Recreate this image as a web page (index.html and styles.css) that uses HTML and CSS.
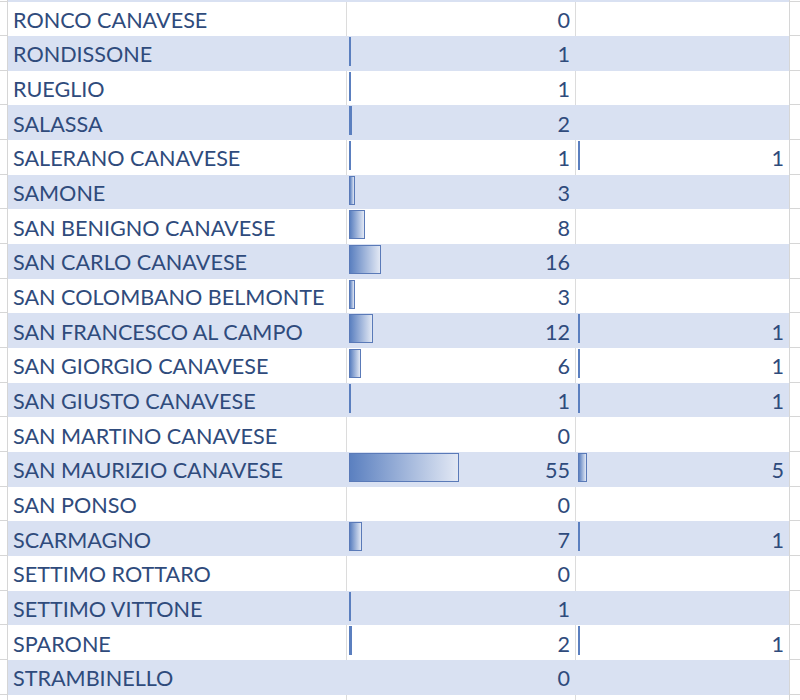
FILE: index.html
```html
<!DOCTYPE html>
<html>
<head>
<meta charset="utf-8">
<link rel="stylesheet" href="styles.css">
</head>
<body>
<div class="sheet">
  <div class="row top band"><div class="edge"></div><div class="cell name"></div><div class="cell num"></div><div class="cell num2"></div><div class="edge-r"></div></div>

  <div class="row"><div class="edge"></div><div class="cell name">RONCO CANAVESE</div><div class="cell num"><span class="v">0</span></div><div class="cell num2"></div><div class="edge-r"></div></div>
  <div class="row band"><div class="edge"></div><div class="cell name">RONDISSONE</div><div class="cell num"><span class="bar thin" style="width:2px"></span><span class="v">1</span></div><div class="cell num2"></div><div class="edge-r"></div></div>
  <div class="row"><div class="edge"></div><div class="cell name">RUEGLIO</div><div class="cell num"><span class="bar thin" style="width:2px"></span><span class="v">1</span></div><div class="cell num2"></div><div class="edge-r"></div></div>
  <div class="row band"><div class="edge"></div><div class="cell name">SALASSA</div><div class="cell num"><span class="bar thin" style="width:3px"></span><span class="v">2</span></div><div class="cell num2"></div><div class="edge-r"></div></div>
  <div class="row"><div class="edge"></div><div class="cell name">SALERANO CANAVESE</div><div class="cell num"><span class="bar thin" style="width:2px"></span><span class="v">1</span></div><div class="cell num2"><span class="bar thin" style="width:2px"></span><span class="v">1</span></div><div class="edge-r"></div></div>
  <div class="row band"><div class="edge"></div><div class="cell name">SAMONE</div><div class="cell num"><span class="bar" style="width:6px"></span><span class="v">3</span></div><div class="cell num2"></div><div class="edge-r"></div></div>
  <div class="row"><div class="edge"></div><div class="cell name">SAN BENIGNO CANAVESE</div><div class="cell num"><span class="bar" style="width:16px"></span><span class="v">8</span></div><div class="cell num2"></div><div class="edge-r"></div></div>
  <div class="row band"><div class="edge"></div><div class="cell name">SAN CARLO CANAVESE</div><div class="cell num"><span class="bar" style="width:32px"></span><span class="v">16</span></div><div class="cell num2"></div><div class="edge-r"></div></div>
  <div class="row"><div class="edge"></div><div class="cell name">SAN COLOMBANO BELMONTE</div><div class="cell num"><span class="bar" style="width:6px"></span><span class="v">3</span></div><div class="cell num2"></div><div class="edge-r"></div></div>
  <div class="row band"><div class="edge"></div><div class="cell name">SAN FRANCESCO AL CAMPO</div><div class="cell num"><span class="bar" style="width:24px"></span><span class="v">12</span></div><div class="cell num2"><span class="bar thin" style="width:2px"></span><span class="v">1</span></div><div class="edge-r"></div></div>
  <div class="row"><div class="edge"></div><div class="cell name">SAN GIORGIO CANAVESE</div><div class="cell num"><span class="bar" style="width:12px"></span><span class="v">6</span></div><div class="cell num2"><span class="bar thin" style="width:2px"></span><span class="v">1</span></div><div class="edge-r"></div></div>
  <div class="row band"><div class="edge"></div><div class="cell name">SAN GIUSTO CANAVESE</div><div class="cell num"><span class="bar thin" style="width:2px"></span><span class="v">1</span></div><div class="cell num2"><span class="bar thin" style="width:2px"></span><span class="v">1</span></div><div class="edge-r"></div></div>
  <div class="row"><div class="edge"></div><div class="cell name">SAN MARTINO CANAVESE</div><div class="cell num"><span class="v">0</span></div><div class="cell num2"></div><div class="edge-r"></div></div>
  <div class="row band"><div class="edge"></div><div class="cell name">SAN MAURIZIO CANAVESE</div><div class="cell num"><span class="bar" style="width:110px"></span><span class="v">55</span></div><div class="cell num2"><span class="bar" style="width:9px"></span><span class="v">5</span></div><div class="edge-r"></div></div>
  <div class="row"><div class="edge"></div><div class="cell name">SAN PONSO</div><div class="cell num"><span class="v">0</span></div><div class="cell num2"></div><div class="edge-r"></div></div>
  <div class="row band"><div class="edge"></div><div class="cell name">SCARMAGNO</div><div class="cell num"><span class="bar" style="width:13px"></span><span class="v">7</span></div><div class="cell num2"><span class="bar thin" style="width:2px"></span><span class="v">1</span></div><div class="edge-r"></div></div>
  <div class="row"><div class="edge"></div><div class="cell name">SETTIMO ROTTARO</div><div class="cell num"><span class="v">0</span></div><div class="cell num2"></div><div class="edge-r"></div></div>
  <div class="row band"><div class="edge"></div><div class="cell name">SETTIMO VITTONE</div><div class="cell num"><span class="bar thin" style="width:2px"></span><span class="v">1</span></div><div class="cell num2"></div><div class="edge-r"></div></div>
  <div class="row"><div class="edge"></div><div class="cell name">SPARONE</div><div class="cell num"><span class="bar thin" style="width:3px"></span><span class="v">2</span></div><div class="cell num2"><span class="bar thin" style="width:2px"></span><span class="v">1</span></div><div class="edge-r"></div></div>
  <div class="row band"><div class="edge"></div><div class="cell name">STRAMBINELLO</div><div class="cell num"><span class="v">0</span></div><div class="cell num2"></div><div class="edge-r"></div></div>
  <div class="row"><div class="edge"></div><div class="cell name"></div><div class="cell num"></div><div class="cell num2"></div><div class="edge-r"></div></div>
</div>
</body>
</html>
```

FILE: styles.css
```css
html, body {
  margin: 0;
  padding: 0;
  background: #ffffff;
}
.sheet {
  width: 800px;
  height: 700px;
  overflow: hidden;
  font-family: "Lato", "Open Sans", sans-serif;
  font-size: 21.6px;
  color: #2f4b7c;
}
.row {
  display: grid;
  grid-template-columns: 8px 339px 229px 213px 11px;
  height: 34.67px;
}
.row.top {
  height: 1.5px;
}
.edge {
  border-right: 1px solid #d6d6d6;
  border-bottom: 1px solid #d6d6d6;
}
.edge-r {
  border-left: 1px solid #d6d6d6;
  border-bottom: 1px solid #d6d6d6;
}
.cell {
  position: relative;
  display: flex;
  align-items: center;
  padding-top: 2px;
  border-right: 1px solid #dcdcdc;
  box-sizing: border-box;
}
.cell.num2 {
  border-right: none;
}
.band .cell {
  background: #d9e1f2;
  border-right-color: #d9e1f2;
}
.name {
  padding-left: 5px;
  white-space: nowrap;
}
.num, .num2 {
  justify-content: flex-end;
  padding-right: 5px;
}
.v {
  position: relative;
  z-index: 1;
}
.bar {
  position: absolute;
  left: 2px;
  top: 1px;
  height: 29px;
  box-sizing: border-box;
  border: 1px solid #5a7ab8;
  background: linear-gradient(to right, #5b80c0, #e2e8f4);
}
.bar.thin {
  border: none;
  background: #5b7fbf;
}
```
